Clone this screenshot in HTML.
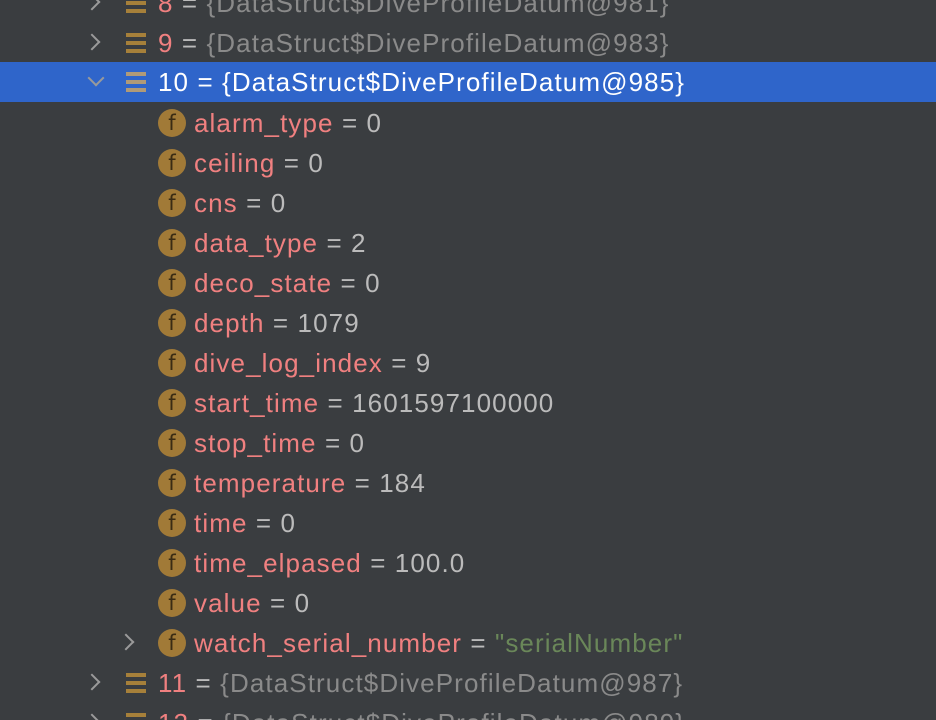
<!DOCTYPE html>
<html><head><meta charset="utf-8"><style>
html,body{margin:0;padding:0;width:936px;height:720px;overflow:hidden;}
body{background:#3a3d40;position:relative;font-family:"Liberation Sans",sans-serif;font-size:26px;letter-spacing:1.1px;}
.r{position:absolute;left:0;width:936px;height:40px;line-height:40px;white-space:nowrap;}
.sel{background:#2f65ca;}
.t{position:absolute;top:0;}
.n{color:#f08080;}
.e{color:#bbbbbb;}
.g{color:#8a8a8a;}
.s{color:#6a8759;}
.w{color:#ffffff;}
.chev{position:absolute;width:10px;height:10px;border-right:2px solid #9a9a9a;border-bottom:2px solid #9a9a9a;}
.list{position:absolute;left:126px;width:20px;height:20px;}
.list i{display:block;height:4px;background:#a6803a;margin-bottom:4px;}
.sel .list i{background:#b09a78;}
.f{position:absolute;left:158px;width:28px;height:28px;border-radius:50%;background:#a17a37;color:#3a2c14;font-size:21px;line-height:28px;text-align:center;letter-spacing:0;font-family:"DejaVu Sans",sans-serif;}
</style></head><body>
<div class="r" style="top:-17px"><div class="chev" style="left:86px;top:13px;transform:rotate(-45deg)"></div><div class="list" style="top:10px"><i></i><i></i><i></i></div><span class="t" style="left:158px"><span class="n">8</span> <span class="e">=</span> <span class="g">{DataStruct$DiveProfileDatum@981}</span></span></div>
<div class="r" style="top:23px"><div class="chev" style="left:86px;top:13px;transform:rotate(-45deg)"></div><div class="list" style="top:10px"><i></i><i></i><i></i></div><span class="t" style="left:158px"><span class="n">9</span> <span class="e">=</span> <span class="g">{DataStruct$DiveProfileDatum@983}</span></span></div>
<div class="r sel" style="top:62px"><div class="chev" style="left:90px;top:10px;transform:rotate(45deg)"></div><div class="list" style="top:10px"><i></i><i></i><i></i></div><span class="t w" style="left:158px">10 = {DataStruct$DiveProfileDatum@985}</span></div>
<div class="r" style="top:103px"><div class="f" style="top:6px">f</div><span class="t" style="left:194px"><span class="n">alarm_type</span> <span class="e">= 0</span></span></div>
<div class="r" style="top:143px"><div class="f" style="top:6px">f</div><span class="t" style="left:194px"><span class="n">ceiling</span> <span class="e">= 0</span></span></div>
<div class="r" style="top:183px"><div class="f" style="top:6px">f</div><span class="t" style="left:194px"><span class="n">cns</span> <span class="e">= 0</span></span></div>
<div class="r" style="top:223px"><div class="f" style="top:6px">f</div><span class="t" style="left:194px"><span class="n">data_type</span> <span class="e">= 2</span></span></div>
<div class="r" style="top:263px"><div class="f" style="top:6px">f</div><span class="t" style="left:194px"><span class="n">deco_state</span> <span class="e">= 0</span></span></div>
<div class="r" style="top:303px"><div class="f" style="top:6px">f</div><span class="t" style="left:194px"><span class="n">depth</span> <span class="e">= 1079</span></span></div>
<div class="r" style="top:343px"><div class="f" style="top:6px">f</div><span class="t" style="left:194px"><span class="n">dive_log_index</span> <span class="e">= 9</span></span></div>
<div class="r" style="top:383px"><div class="f" style="top:6px">f</div><span class="t" style="left:194px"><span class="n">start_time</span> <span class="e">= 1601597100000</span></span></div>
<div class="r" style="top:423px"><div class="f" style="top:6px">f</div><span class="t" style="left:194px"><span class="n">stop_time</span> <span class="e">= 0</span></span></div>
<div class="r" style="top:463px"><div class="f" style="top:6px">f</div><span class="t" style="left:194px"><span class="n">temperature</span> <span class="e">= 184</span></span></div>
<div class="r" style="top:503px"><div class="f" style="top:6px">f</div><span class="t" style="left:194px"><span class="n">time</span> <span class="e">= 0</span></span></div>
<div class="r" style="top:543px"><div class="f" style="top:6px">f</div><span class="t" style="left:194px"><span class="n">time_elpased</span> <span class="e">= 100.0</span></span></div>
<div class="r" style="top:583px"><div class="f" style="top:6px">f</div><span class="t" style="left:194px"><span class="n">value</span> <span class="e">= 0</span></span></div>
<div class="r" style="top:623px"><div class="chev" style="left:120px;top:13px;transform:rotate(-45deg)"></div><div class="f" style="top:6px">f</div><span class="t" style="left:194px"><span class="n">watch_serial_number</span> <span class="e">=</span> <span class="s">"serialNumber"</span></span></div>
<div class="r" style="top:663px"><div class="chev" style="left:86px;top:13px;transform:rotate(-45deg)"></div><div class="list" style="top:10px"><i></i><i></i><i></i></div><span class="t" style="left:158px"><span class="n">11</span> <span class="e">=</span> <span class="g">{DataStruct$DiveProfileDatum@987}</span></span></div>
<div class="r" style="top:703px"><div class="chev" style="left:86px;top:13px;transform:rotate(-45deg)"></div><div class="list" style="top:10px"><i></i><i></i><i></i></div><span class="t" style="left:158px"><span class="n">12</span> <span class="e">=</span> <span class="g">{DataStruct$DiveProfileDatum@989}</span></span></div>
</body></html>
